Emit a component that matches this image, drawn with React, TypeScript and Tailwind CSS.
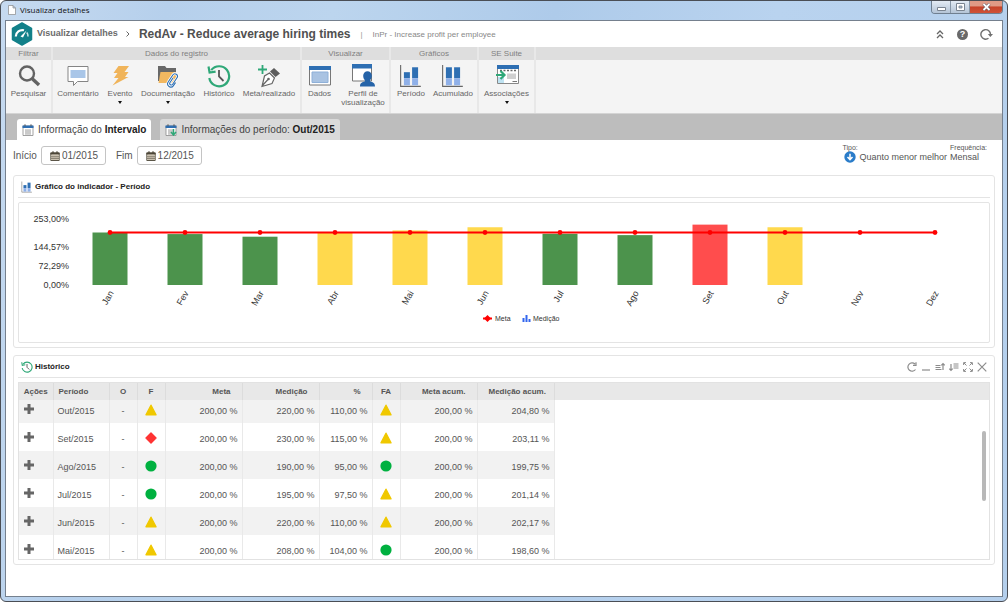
import type { ReactNode } from "react";

const GREEN = "#4c934c";
const YELLOW = "#ffd94d";
const RED = "#ff4d4d";

const months: { name: string; value?: number; color?: string }[] = [
  { name: "Jan", value: 200, color: GREEN },
  { name: "Fev", value: 194, color: GREEN },
  { name: "Mar", value: 184, color: GREEN },
  { name: "Abr", value: 201, color: YELLOW },
  { name: "Mai", value: 208, color: YELLOW },
  { name: "Jun", value: 220, color: YELLOW },
  { name: "Jul", value: 195, color: GREEN },
  { name: "Ago", value: 190, color: GREEN },
  { name: "Set", value: 230, color: RED },
  { name: "Out", value: 220, color: YELLOW },
  { name: "Nov" },
  { name: "Dez" },
];

type Shape = "warn" | "bad" | "ok";

const rows: { period: string; f: Shape; fa: Shape; measure: string; pct: string; acc: string }[] = [
  { period: "Out/2015", f: "warn", fa: "warn", measure: "220,00 %", pct: "110,00 %", acc: "204,80 %" },
  { period: "Set/2015", f: "bad", fa: "warn", measure: "230,00 %", pct: "115,00 %", acc: "203,11 %" },
  { period: "Ago/2015", f: "ok", fa: "ok", measure: "190,00 %", pct: "95,00 %", acc: "199,75 %" },
  { period: "Jul/2015", f: "ok", fa: "warn", measure: "195,00 %", pct: "97,50 %", acc: "201,14 %" },
  { period: "Jun/2015", f: "warn", fa: "warn", measure: "220,00 %", pct: "110,00 %", acc: "202,17 %" },
  { period: "Mai/2015", f: "warn", fa: "ok", measure: "208,00 %", pct: "104,00 %", acc: "198,60 %" },
];

function Status({ shape }: { shape: Shape }) {
  return (
    <svg viewBox="0 0 12 12" className="mx-auto block size-3">
      {shape === "ok" && <circle cx="6" cy="6" r="5.6" fill="#00b140" />}
      {shape === "bad" && (
        <path d="M6 1 11 6 6 11 1 6Z" fill="#ff3333" stroke="#ff3333" strokeWidth="1.4" strokeLinejoin="round" />
      )}
      {shape === "warn" && (
        <path d="M6 1.2 11 10.8H1Z" fill="#f0c800" stroke="#f0c800" strokeWidth="1.4" strokeLinejoin="round" />
      )}
    </svg>
  );
}

function HistoryIcon({ className }: { className: string }) {
  return (
    <svg viewBox="0 0 24 24" className={className} fill="none">
      <path d="M4.2 6.2A10 10 0 1 1 2.3 14" stroke="#2fa878" strokeWidth="2.2" />
      <path d="M1.5 2.5 2.6 8.6 8.6 7.6" stroke="#2fa878" strokeWidth="2.2" />
      <path d="M12 6v6.5l4.5 4.5" stroke="#555" strokeWidth="1.8" />
    </svg>
  );
}

function BarsIcon({ joined, className }: { joined?: boolean; className: string }) {
  return (
    <svg viewBox="0 0 22 22" className={className}>
      <path d="M1.500 1v19.500H20" stroke="#666" strokeWidth="1" fill="none" />
      <path d={joined ? "M4.500 3H10v10H4.500z" : "M4.500 7.500H10V13H4.500z"} fill="#2e6fb3" />
      <path d="M4.500 13H10v6.500H4.500z" fill="#8fb0e8" />
      <path d="M12 3h5.500v10H12z" fill="#2e6fb3" />
      <path d="M12 13h5.500v6.500H12z" fill="#8fb0e8" />
    </svg>
  );
}

const icon = "block h-[24px] w-[24px]";

const icons: Record<string, ReactNode> = {
  search: (
    <svg viewBox="0 0 24 24" className={icon} fill="none" stroke="#636363">
      <circle cx="10" cy="9.500" r="7" strokeWidth="2.400" />
      <path d="m15 14.500 7 6.500" strokeWidth="3.400" />
    </svg>
  ),
  comment: (
    <svg viewBox="0 0 24 24" className={icon}>
      <path d="M2 2.500h20v15H11.500L7.500 21.500V17.500H2Z" fill="#fff" stroke="#858585" />
      <path d="M4.500 6h15v8h-15z" fill="#a9c6e8" />
    </svg>
  ),
  event: (
    <svg viewBox="0 0 24 24" className={icon}>
      <path d="M10.500 2H21l-4.500 6h4l-3.500 5h3.500L4.500 21.500 10.500 14H6l3.500-5H5.500Z" fill="#f0b45a" />
    </svg>
  ),
  folder: (
    <svg viewBox="0 0 24 24" className={icon} fill="none">
      <path d="M2 2h7l1.500 2H20v4H5v9H2Z" fill="#686868" />
      <path d="M4.500 8H20v11H2.500Z" fill="#f2b860" />
      <path d="m17 14-3 4.500a1.600 1.600 0 0 0 2.700 1.800l4.300-6.500a2.500 2.500 0 0 0-4.200-2.800l-4.600 7a3.200 3.200 0 0 0 5.300 3.600l2-3" stroke="#fff" strokeWidth="2.600" />
      <path d="m17 14-3 4.500a1.600 1.600 0 0 0 2.700 1.800l4.300-6.500a2.500 2.500 0 0 0-4.200-2.800l-4.600 7a3.200 3.200 0 0 0 5.300 3.600l2-3" stroke="#2e6fb3" strokeWidth="1.100" />
    </svg>
  ),
  history: <HistoryIcon className={icon} />,
  pen: (
    <svg viewBox="0 0 24 24" className={icon} fill="none">
      <path d="M5.500 1v9M1 5.500h9" stroke="#2fa878" strokeWidth="1.800" />
      <path d="m17 4 6 5.500-4.500 3.500-5.500-5.500Z" fill="#5c5c5c" />
      <path d="m12.500 9 5 5-2.500 5.500L5 22.500 7.500 12ZM5 22l6-6.500" fill="#fff" stroke="#666" strokeWidth="1.200" />
      <circle cx="11.500" cy="15" r="1.300" fill="#666" />
    </svg>
  ),
  data: (
    <svg viewBox="0 0 24 24" className={icon}>
      <path d="M1.500 2.500h21v18.500h-21z" fill="#fff" stroke="#777" />
      <path d="M1 2h22v4H1z" fill="#2e6fb3" />
      <path d="M4 8h16v10.500H4z" fill="#a9c3e2" stroke="#8eb0d8" />
    </svg>
  ),
  profile: (
    <svg viewBox="0 0 24 24" className={icon}>
      <path d="M1.500 1h19v16h-19z" fill="#fff" stroke="#777" />
      <path d="M1 0h20v4.500H1z" fill="#2e6fb3" />
      <path d="M9 22.500c0-3.500 2-4.500 4.800-5v-1.500c-1-1-1.600-2.500-1.600-4.500a4.300 4.300 0 0 1 8.600 0c0 2-.6 3.500-1.600 4.500v1.500c2.800.5 4.800 1.500 4.800 5Z" fill="#2563a8" />
    </svg>
  ),
  bars: <BarsIcon className={icon} />,
  barsJoined: <BarsIcon className={icon} joined />,
  assoc: (
    <svg viewBox="0 0 24 24" className={icon}>
      <path d="M2.500 2h21v17.500h-21z" fill="#fff" stroke="#888" />
      <path d="M2 1h22v4H2z" fill="#2e6fb3" />
      <path d="M5 6.500h17" stroke="#666" strokeWidth="1.400" strokeDasharray="2 1.500" />
      <path d="M3 13h6v6H3z" fill="#bfe3f2" />
      <path d="M12 9.500h9V15h-9z" fill="#d0d0d0" />
      <path d="M17.500 17.500H22" stroke="#777" />
      <path d="M1 11h7M5.500 7l4 4-4 4" stroke="#2fa878" strokeWidth="2.200" fill="none" />
    </svg>
  ),
};

const groups: {
  title: string;
  box: string;
  items: { label: string; icon: string; width: string; menu?: boolean }[];
}[] = [
  { title: "Filtrar", box: "w-[47px]", items: [{ label: "Pesquisar", icon: "search", width: "w-[45px]" }] },
  {
    title: "Dados do registro",
    box: "w-[249px]",
    items: [
      { label: "Comentário", icon: "comment", width: "w-[50px]" },
      { label: "Evento", icon: "event", width: "w-[34px]", menu: true },
      { label: "Documentação", icon: "folder", width: "w-[62px]", menu: true },
      { label: "Histórico", icon: "history", width: "w-10" },
      { label: "Meta/realizado", icon: "pen", width: "w-[60px]" },
    ],
  },
  {
    title: "Visualizar",
    box: "w-[89px]",
    items: [
      { label: "Dados", icon: "data", width: "w-[35px]" },
      { label: "Perfil de visualização", icon: "profile", width: "w-[52px]" },
    ],
  },
  {
    title: "Gráficos",
    box: "w-[88px]",
    items: [
      { label: "Período", icon: "bars", width: "w-10" },
      { label: "Acumulado", icon: "barsJoined", width: "w-11" },
    ],
  },
  {
    title: "SE Suite",
    box: "w-[57px]",
    items: [{ label: "Associações", icon: "assoc", width: "w-[55px]", menu: true }],
  },
];

function Ribbon() {
  return (
    <div className="flex h-[67px] shrink-0 border-b border-[#d4d4d4] bg-[#f4f4f4] text-[8px] leading-[9px] text-[#666]">
      {groups.map((g) => (
        <section key={g.title} className={`${g.box} shrink-0 border-r-2 border-[#e8e8e8]`}>
          <h2 className="h-[13px] bg-[#dedede] text-center leading-[13px] text-[#808080]">{g.title}</h2>
          <div className="flex pt-[4px]">
            {g.items.map((it) => (
              <button key={it.label} type="button" className={`${it.width} flex shrink-0 flex-col items-center`}>
                {icons[it.icon]}
                <span className={it.icon === "profile" ? "pt-px text-center" : "pt-px whitespace-nowrap"}>{it.label}</span>
                {it.menu && (
                  <svg viewBox="0 0 4 3" className="mt-[3px] h-[3px] w-1">
                    <path d="M0 0h4L2 3Z" fill="#111" />
                  </svg>
                )}
              </button>
            ))}
          </div>
        </section>
      ))}
      <div className="h-[13px] flex-1 bg-[#dedede]" />
    </div>
  );
}

function TitleBar() {
  return (
    <div className="flex h-[19px] shrink-0 items-start justify-between">
      <div className="flex h-[18px] items-center gap-1 pl-[3px] text-[8px] text-[#111]" style={{ fontFamily: "'Open Sans', sans-serif" }}>
        <svg viewBox="0 0 8 10" className="h-[10px] w-2">
          <path d="M.5.5h4.500l2.500 2.500v6.500h-7ZM5 .5V3h2.500" fill="#fff" stroke="#8a8a8a" strokeWidth=".7" />
        </svg>
        <span>Visualizar detalhes</span>
      </div>
      <div className="flex h-[13px] overflow-hidden rounded-b border border-t-0 border-[#6f7f90]">
        <button type="button" aria-label="Minimizar" className="flex w-[19px] items-center justify-center border-r border-[#8797a8] bg-linear-to-b from-[#e3ebf4] to-[#b4c4d6]">
          <svg viewBox="0 0 9 4" className="mt-1 h-1 w-[9px]"><path d="M.5.5h8v3h-8z" fill="#fff" stroke="#7a8491" /></svg>
        </button>
        <button type="button" aria-label="Maximizar" className="flex w-[19px] items-center justify-center border-r border-[#8797a8] bg-linear-to-b from-[#e3ebf4] to-[#b4c4d6]">
          <svg viewBox="0 0 9 8" className="h-2 w-[9px]"><path d="M.5.5h8v7h-8z" fill="#fff" stroke="#7a8491" /><path d="M3 3h3v2H3z" fill="#a9bccf" stroke="#7a8491" strokeWidth=".8" /></svg>
        </button>
        <button type="button" aria-label="Fechar" className="flex w-8 items-center justify-center bg-linear-to-b from-[#e09a86] from-40% via-[#c6432a] via-50% to-[#cf5238]">
          <svg viewBox="0 0 9 8" className="h-2 w-[9px]" fill="none"><path d="m1.500 1 6 6m0-6-6 6" stroke="#5b5560" strokeWidth="3" /><path d="m1.500 1 6 6m0-6-6 6" stroke="#fff" strokeWidth="1.800" /></svg>
        </button>
      </div>
    </div>
  );
}

function Header() {
  return (
    <header className="flex h-[26px] shrink-0 items-center pr-[9px] pl-[5px]">
      <svg viewBox="0 0 22 24" className="h-6 w-[22px]">
        <path d="M11 1 20.500 6.500v11L11 23 1.500 17.500v-11Z" fill="#128089" stroke="#128089" strokeWidth="1.500" strokeLinejoin="round" />
        <path d="M4.800 14.500A6.500 6.500 0 0 1 13 8.300" stroke="#fff" strokeWidth="2.200" fill="none" />
        <path d="M15.800 10.500c1 1.200 1.300 2.300 1.200 4" stroke="#cfe6e8" strokeWidth="1.500" fill="none" />
        <path d="m9.500 14.500 6-6-3.500 7Z" fill="#fff" />
      </svg>
      <nav className="ml-1 flex items-center whitespace-nowrap">
        <a href="#detalhes" className="text-[9px] font-bold text-[#6b6b6b]">Visualizar detalhes</a>
        <svg viewBox="0 0 4 6" className="mr-[9px] ml-2 h-[6px] w-1"><path d="m.5.5 2.500 2.500L.5 5.500" fill="none" stroke="#666" /></svg>
        <h1 className="text-[12px] font-bold text-[#505050]">RedAv - Reduce average hiring times</h1>
        <span className="mx-[10px] pt-px text-[8px] text-[#999]">|</span>
        <span className="pt-px text-[8px] text-[#888]">InPr - Increase profit per employee</span>
      </nav>
      <div className="ml-auto flex items-center gap-3">
        <button type="button" aria-label="Recolher">
          <svg viewBox="0 0 10 10" className="block size-[10px]" fill="none" stroke="#666" strokeWidth="1.300"><path d="m2 5 3-3 3 3M2 9l3-3 3 3" /></svg>
        </button>
        <button type="button" aria-label="Ajuda" className="size-[11px] rounded-full bg-[#696969] text-center text-[9px] leading-[11px] font-bold text-white">?</button>
        <button type="button" aria-label="Atualizar">
          <svg viewBox="0 0 13 12" className="block h-3 w-[13px]"><path d="M8.500 10.300A4.800 4.800 0 1 1 10.500 6.500" fill="none" stroke="#707070" strokeWidth="1.400" /><path d="M7.800 6h5.200L10.400 9Z" fill="#707070" /></svg>
        </button>
      </div>
    </header>
  );
}

function TabIcon({ arrow }: { arrow?: boolean }) {
  return (
    <svg viewBox="0 0 12 12" className="size-3">
      <path d="M1 2h10v9.500H1z" fill="#fff" stroke="#8a8a8a" strokeWidth=".8" />
      <path d="M.5 1.500h11v2.500H.5z" fill="#2e6fb3" />
      <path d="M3 .3v2M9 .3v2" stroke="#555" />
      <path d="M3 6h6M3 8h6M3 10h6M4 5.500v5M6 5.500v5M8 5.500v5" stroke="#999" strokeWidth=".6" />
      {arrow && <path d="M8.500 5v5M6 8l2.500 3L11 8" stroke="#2fa878" strokeWidth="1.500" fill="none" />}
    </svg>
  );
}

function Tabs() {
  return (
    <div role="tablist" className="flex h-[26px] shrink-0 items-end gap-[9px] bg-[#bdbdbd] pl-[11px] text-[10px] text-[#444]">
      <button role="tab" aria-selected="true" type="button" className="flex h-[21px] items-center gap-1 rounded-t-[3px] bg-white px-[5px] whitespace-nowrap">
        <TabIcon />
        <span>Informação do <b className="text-[#222]">Intervalo</b></span>
      </button>
      <button role="tab" aria-selected="false" type="button" className="flex h-[21px] items-center gap-1 rounded-t-[3px] bg-[#dadada] px-[5px] whitespace-nowrap">
        <TabIcon arrow />
        <span>Informações do período: <b className="text-[#222]">Out/2015</b></span>
      </button>
    </div>
  );
}

function DateField({ id, label, value }: { id: string; label: string; value: string }) {
  return (
    <div className="flex items-center gap-1">
      <label htmlFor={id}>{label}</label>
      <div className="flex h-[19px] w-[65px] items-center gap-[2px] rounded-[3px] border border-[#c4c4c4] pl-2">
        <svg viewBox="0 0 10 10" className="size-[10px] shrink-0">
          <path d="M.8 2h8.400v7.500H.8z" fill="#f3ead9" stroke="#4c4638" strokeWidth=".9" />
          <path d="M.5 1.500h9V3.500h-9z" fill="#4c4638" />
          <path d="M3 .2v2M7 .2v2" stroke="#4c4638" strokeWidth="1.200" />
          <path d="M3 4v5.500M5 4v5.500M7 4v5.500M1 5.700h8M1 7.500h8" stroke="#4c4638" strokeWidth=".5" />
        </svg>
        <input id={id} defaultValue={value} className="w-full min-w-0 bg-transparent p-0 outline-none" />
      </div>
    </div>
  );
}

function Filters() {
  return (
    <div className="flex h-[34px] shrink-0 items-start justify-between pr-[15px] pl-[7px] text-[#555]">
      <div className="flex gap-[10px] pt-[6px] text-[10px]">
        <DateField id="inicio" label="Início" value="01/2015" />
        <DateField id="fim" label="Fim" value="12/2015" />
      </div>
      <dl className="flex gap-[3px] pt-[4px] text-[9px] leading-[10px] whitespace-nowrap">
        <div>
          <dt className="text-[7px] leading-[7px]">Tipo:</dt>
          <dd className="flex items-center gap-[3px] pl-[2px]">
            <svg viewBox="0 0 12 12" className="size-3"><circle cx="6" cy="6" r="5.700" fill="#2a7cc9" /><path d="M6 2.800v5.500M3.500 6 6 8.600 8.500 6" stroke="#fff" strokeWidth="1.500" fill="none" /></svg>
            Quanto menor melhor
          </dd>
        </div>
        <div>
          <dt className="text-[7px] leading-[7px]">Frequência:</dt>
          <dd className="leading-3">Mensal</dd>
        </div>
      </dl>
    </div>
  );
}

function Chart() {
  const base = 82;
  const y = (v: number) => base - (v * 52.5) / 200;
  const x = (i: number) => 91 + i * 75;
  return (
    <svg viewBox="0 0 970 139" className="block h-auto w-full" fontFamily="'Liberation Sans', Arial, sans-serif" fill="#333">
      {[
        ["253,00%", 16],
        ["144,57%", 44],
        ["72,29%", 63],
        ["0,00%", 82],
      ].map(([t, cy]) => (
        <text key={t} x="50" y={Number(cy) + 3} fontSize="9" textAnchor="end">{t}</text>
      ))}
      {months.map((m, i) =>
        m.value ? <rect key={m.name} x={x(i) - 17.5} y={y(m.value)} width="35" height={base - y(m.value)} fill={m.color} /> : null,
      )}
      <path d={`M${x(0)} ${y(200)}H${x(11)}`} stroke="#f00" strokeWidth="2" />
      {months.map((m, i) => (
        <g key={m.name}>
          <circle cx={x(i)} cy={y(200)} r="2.400" fill="#f00" />
          <text fontSize="9" textAnchor="end" transform={`translate(${x(i) + 4} 90) rotate(-60)`}>{m.name}</text>
        </g>
      ))}
      <path d="M464 115.500h9" stroke="#f00" strokeWidth="2" />
      <path d="m468.500 112 3.500 3.500-3.500 3.500-3.500-3.500Z" fill="#f00" />
      <text x="476" y="118" fontSize="7">Meta</text>
      <path d="M504.500 119v-4M507.500 119v-7M510.500 119v-3" stroke="#3366ee" strokeWidth="2" />
      <text x="514" y="118" fontSize="7">Medição</text>
    </svg>
  );
}

const tool = "block size-[10px]";

function PanelTools() {
  const s = { fill: "none", stroke: "#8c8c8c", strokeWidth: 1.2 };
  return (
    <div className="ml-auto flex items-center gap-1">
      <button type="button" aria-label="Atualizar"><svg viewBox="0 0 10 10" className={tool} {...s}><path d="M8.500 7.500A4.200 4.200 0 1 1 8 2M9 .3v3H6" /></svg></button>
      <button type="button" aria-label="Minimizar"><svg viewBox="0 0 10 10" className={tool} {...s}><path d="M1 8h8" strokeWidth="1.200" /></svg></button>
      <button type="button" aria-label="Mover para cima"><svg viewBox="0 0 10 10" className={tool} {...s}><path d="M.5 3.500h5M.5 5.500h5M.5 7.500h6M8 8V1.500M6.300 3.300 8 1.500l1.700 1.800" /></svg></button>
      <button type="button" aria-label="Mover para baixo"><svg viewBox="0 0 10 10" className={tool} {...s}><path d="M4.500 2h5M4.500 4h5M4.500 6h5M2 2v6.500M.3 6.700 2 8.500l1.700-1.800" /></svg></button>
      <button type="button" aria-label="Expandir"><svg viewBox="0 0 10 10" className={tool} {...s}><path d="M.6 3V.6H3M7 .6h2.400V3M9.400 7v2.400H7M3 9.400H.6V7M1 1l2.500 2.500M9 1 6.500 3.500M9 9 6.500 6.500M1 9l2.500-2.500" strokeWidth="1" /></svg></button>
      <button type="button" aria-label="Fechar"><svg viewBox="0 0 10 10" className={tool} {...s}><path d="m.7.7 8.600 8.600m0-8.600L.7 9.300" /></svg></button>
    </div>
  );
}

function Panel({ title, icon: head, tools, children }: { title: string; icon: ReactNode; tools?: ReactNode; children: ReactNode }) {
  return (
    <section className="rounded-[3px] border border-[#e4e4e4] px-1 pb-1">
      <div className="flex h-[22px] items-center gap-[2px] border-b border-[#e4e4e4] px-[3px] text-[#222]">
        {head}
        <h2 className="text-[8px] font-bold">{title}</h2>
        {tools}
      </div>
      {children}
    </section>
  );
}

function HistoryTable() {
  const cell = "border-r border-[#e9e9e9] px-1 pb-[7px] align-bottom";
  const head = "border-r border-[#dcdcdc] px-[11px] text-right font-bold";
  return (
    <div className="relative mt-1 h-[178px] overflow-hidden border border-[#e2e2e2]">
      <div className="h-[17px] bg-[#e8e8e8]">
        <table className="w-[535px] table-fixed border-collapse text-[9px] leading-[10px] text-[#555]">
          <colgroup>
            <col className="w-[34px]" />
            <col className="w-[56px]" />
            <col className="w-[28px]" />
            <col className="w-[28px]" />
            <col className="w-[77px]" />
            <col className="w-[77px]" />
            <col className="w-[53px]" />
            <col className="w-[28px]" />
            <col className="w-[77px]" />
            <col className="w-[77px]" />
          </colgroup>
          <thead>
            <tr className="h-[17px] text-[8px] whitespace-nowrap">
              <th className="border-r border-[#dcdcdc] text-center font-bold">Ações</th>
              <th className="border-r border-[#dcdcdc] pl-[5px] text-left font-bold">Período</th>
              <th className="border-r border-[#dcdcdc] text-center font-bold">O</th>
              <th className="border-r border-[#dcdcdc] text-center font-bold">F</th>
              <th className={head}>Meta</th>
              <th className={head}>Medição</th>
              <th className={head}>%</th>
              <th className="border-r border-[#dcdcdc] text-center font-bold">FA</th>
              <th className={head}>Meta acum.</th>
              <th className={head}>Medição acum.</th>
            </tr>
          </thead>
          <tbody>
            {rows.map((r, i) => (
              <tr key={r.period} className={`${i === 0 ? "h-[23px]" : "h-7"} ${i % 2 ? "bg-white" : "bg-[#f2f2f2]"}`}>
                <td className={cell}>
                  <button type="button" aria-label={`Adicionar ${r.period}`} className="ml-px block pb-[2px]">
                    <svg viewBox="0 0 10 10" className="block size-[10px]"><path d="M3.500 0h3v3.500H10v3H6.500V10h-3V6.500H0v-3h3.500Z" fill="#666" /></svg>
                  </button>
                </td>
                <td className={cell}>{r.period}</td>
                <td className={`${cell} text-center`}>-</td>
                <td className={cell}><Status shape={r.f} /></td>
                <td className={`${cell} text-right`}>200,00 %</td>
                <td className={`${cell} text-right`}>{r.measure}</td>
                <td className={`${cell} text-right`}>{r.pct}</td>
                <td className={cell}><Status shape={r.fa} /></td>
                <td className={`${cell} text-right`}>200,00 %</td>
                <td className={`${cell} text-right`}>{r.acc}</td>
              </tr>
            ))}
          </tbody>
        </table>
      </div>
      <div className="absolute top-12 right-[3px] h-[70px] w-1 rounded-full bg-[#b8b8b8]" />
    </div>
  );
}

export default function App() {
  return (
    <div
      className="flex min-h-screen flex-col rounded-md border border-[#4a4e55] bg-[linear-gradient(100deg,#c6daf0_0%,#b6d0ec_15%,#bcd5ee_30%,#aecbea_50%,#b9d3ef_70%,#b4cfec_100%)] px-1 pb-1"
      style={{ fontFamily: "'Liberation Sans', Arial, sans-serif" }}
    >
      <TitleBar />
      <main className="flex flex-1 flex-col border border-[#75808e] bg-white">
        <Header />
        <Ribbon />
        <Tabs />
        <Filters />
        <div className="flex flex-col gap-[7px] px-[7px] pt-px">
          <Panel title="Gráfico do indicador - Período" icon={<BarsIcon className="h-3 w-3" />}>
            <div className="mt-1 rounded-[2px] border border-[#e4e4e4]">
              <Chart />
            </div>
          </Panel>
          <Panel title="Histórico" icon={<HistoryIcon className="size-3" />} tools={<PanelTools />}>
            <HistoryTable />
          </Panel>
        </div>
      </main>
    </div>
  );
}
